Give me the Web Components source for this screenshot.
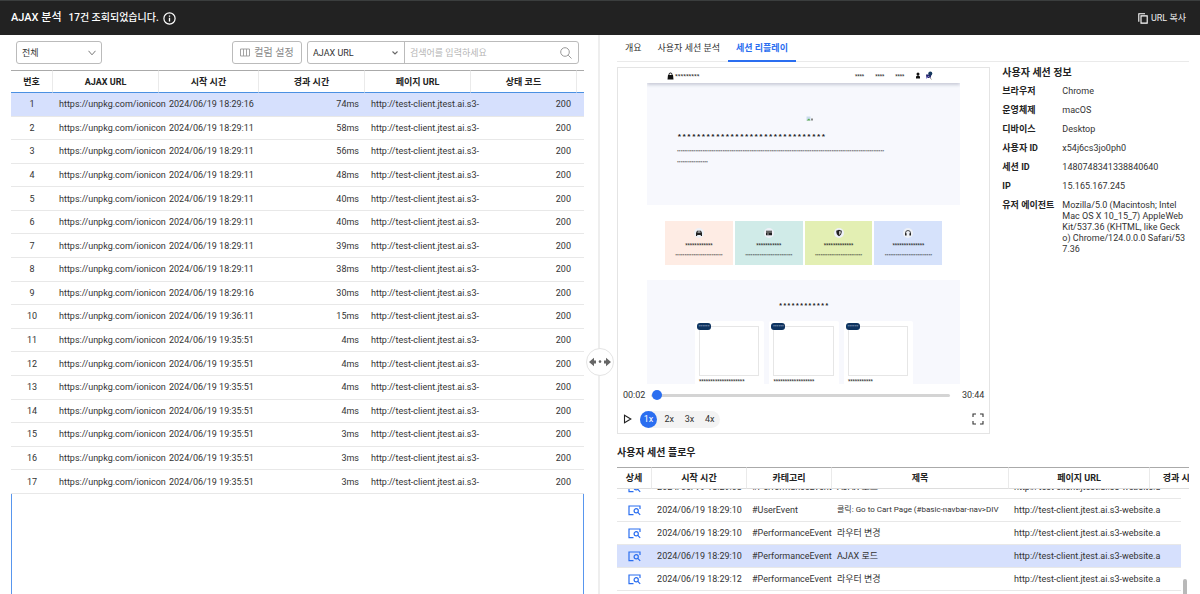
<!DOCTYPE html>
<html lang="ko">
<head>
<meta charset="utf-8">
<meta name="viewport" content="width=device-width, initial-scale=1">
<title>AJAX 분석</title>
<style>
  html, body { height: 100%; }
  body { margin: 0; display: flex; flex-direction: column; overflow: hidden; background: #fff; color: #333;
    font: 9px/12px Roboto, "Noto Sans CJK KR", sans-serif; }
</style>
</head>
<body>
<app-header heading="AJAX 분석" summary="17건 조회되었습니다."></app-header>
<split-view>
  <list-toolbar slot="left"></list-toolbar>
  <ajax-table slot="left"></ajax-table>
  <tab-bar slot="right"></tab-bar>
  <session-detail slot="right">
    <replay-player></replay-player>
    <session-info slot="info"></session-info>
  </session-detail>
  <session-flow slot="right"></session-flow>
</split-view>

<script>
const BASE = `*, *::before, *::after { box-sizing: border-box; }
  button, input, select { font: inherit; color: inherit; margin: 0; padding: 0; border: 0; background: none; }
  h1, h2, p, dl, dd { margin: 0; } svg { display: block; flex: none; }`;

function define(name, markup, setup) {
  customElements.define(name, class extends HTMLElement {
    connectedCallback() {
      if (this.shadowRoot) return;
      const root = this.attachShadow({ mode: 'open' });
      const template = document.createElement('template');
      template.innerHTML = `<style>${BASE}</style>` + markup;
      root.append(template.content.cloneNode(true));
      if (setup) setup.call(this, root);
    }
  });
}

define('app-header', `
<style>
  :host { display: block; flex: none; }
  header { display: flex; align-items: center; height: 35px; padding: 0 14px 0 11px; color: #fff; background: #222; border-top: 1px solid #3b3e3e; }
  h1 { font-size: 11px; font-weight: 500; margin-right: 7px; }
  p { font-size: 10px; font-weight: 500; margin-right: 4px; }
  button { display: flex; align-items: center; gap: 3px; margin-left: auto; color: #eee; }
</style>
<header>
  <h1></h1><p></p>
  <svg width="13" height="13" viewBox="0 0 13 13" fill="none" stroke="#fff"><circle cx="6.5" cy="6.5" r="5.6" stroke-width="1.2"/><path d="M6.5 5.8v3.8M6.5 3.4v1.4" stroke-width="1.3"/></svg>
  <button type="button"><svg width="10" height="11" viewBox="0 0 10 11" fill="none" stroke="#fff"><path d="M7 .7H.8v8M3 2.9h6.2v7.2H3z" stroke-width="1.1"/></svg>URL 복사</button>
</header>`, function (root) {
  root.querySelector('h1').textContent = this.getAttribute('heading');
  root.querySelector('p').textContent = this.getAttribute('summary');
});

define('split-view', `
<style>
  :host { display: grid; grid-template-columns: 1fr 1fr; flex: 1; min-height: 0; position: relative; }
  section { display: flex; flex-direction: column; min-width: 0; min-height: 0; overflow: hidden; }
  .left { padding: 6px 14px 0 11px; border-right: 2px solid #eee; }
  .right { padding: 0 11px 0 17px; }
  .grip { position: absolute; top: 327px; left: 50%; translate: -50% -50%; width: 28px; height: 28px; border-radius: 50%; border: 1px solid #e4e4e4; background: #fff; display: grid; place-items: center; }
</style>
<section class="left"><slot name="left"></slot></section>
<section class="right"><slot name="right"></slot></section>
<button class="grip" type="button" aria-label="크기 조절"><svg width="22" height="10" viewBox="0 0 22 10" fill="#666"><path d="M0 5 5 .8v2.700h2v3H5v2.700zM22 5 17 .8v2.700h-2v3h2v2.700z"/><circle cx="11" cy="4.600" r="1.300"/></svg></button>`);

define('list-toolbar', `
<style>
  :host { display: block; flex: none; }
  form { display: flex; align-items: stretch; height: 23px; margin: 0 5px; }
  .pick { display: grid; align-items: center; border: 1px solid #bbb; border-radius: 3px; }
  .pick select, .pick svg { grid-area: 1 / 1; }
  .pick select { appearance: none; width: 100%; height: 100%; padding: 0 5px; outline: 0; }
  .pick svg { justify-self: end; margin-right: 5px; pointer-events: none; }
  .scope { width: 86px; margin-right: auto; }
  .columns { display: flex; align-items: center; justify-content: center; gap: 4px; width: 70px; margin-right: 5px; font-size: 10px; color: #888; border: 1px solid #bbb; border-radius: 3px; }
  .search { display: flex; width: 272px; border: 1px solid #bbb; border-radius: 3px; }
  .search .pick { width: 97px; border-width: 0 1px 0 0; border-radius: 0; }
  input { flex: 1; min-width: 0; padding: 0 5px; outline: 0; }
  input::placeholder { color: #b5b5b5; }
  .go { padding-right: 6px; }
</style>
<form onsubmit="return false">
  <div class="pick scope"><select aria-label="범위"><option>전체</option></select>
    <svg width="8" height="6" viewBox="0 0 8 6" fill="none" stroke="#777"><path d="M.5.8 4 4.8 7.5.8"/></svg></div>
  <button class="columns" type="button"><svg width="10" height="9" viewBox="0 0 10 9" fill="none" stroke="#999" stroke-width=".9"><path d="M.5 1h9v7h-9zM3.5 1v7M6.5 1v7"/></svg>컬럼 설정</button>
  <div class="search">
    <div class="pick"><select aria-label="검색 항목"><option>AJAX URL</option></select>
      <svg width="8" height="6" viewBox="0 0 8 6" fill="none" stroke="#666" stroke-width="1.1"><path d="M1.5 1.5 4 4l2.500-2.500"/></svg></div>
    <input type="text" aria-label="검색어" placeholder="검색어를 입력하세요">
    <button class="go" type="submit" aria-label="검색"><svg width="12" height="12" viewBox="0 0 12 12" fill="none" stroke="#999"><circle cx="5" cy="5" r="4.300"/><path d="m8.200 8.200 3.300 3.300"/></svg></button>
  </div>
</form>`);

const TABLE = `
  table { border-collapse: separate; border-spacing: 0; table-layout: fixed; width: 100%; }
  th, td { padding: 0 6px; white-space: nowrap; text-align: left; vertical-align: middle; }
  th { height: 22px; padding: 0; text-align: center; font-weight: 700; color: #222; background: #fff; border-top: 1px solid #aaa; border-right: 1px solid #eaeaea; }
  th:last-child { border-right: 0; }
  td { border-bottom: 1px solid #e8e8e8; }
  td.mid { text-align: center; padding: 0; }
  td.num { text-align: right; }
  .picked { background: #d6e0fd; }`;

const DAY = '2024/06/19 ';
const REQUESTS = [['18:29:16', 74], ['18:29:11', 58], ['18:29:11', 56], ['18:29:11', 48], ['18:29:11', 40], ['18:29:11', 40],
  ['18:29:11', 39], ['18:29:11', 38], ['18:29:16', 30], ['19:36:11', 15], ['19:35:51', 4], ['19:35:51', 4], ['19:35:51', 4],
  ['19:35:51', 4], ['19:35:51', 3], ['19:35:51', 3], ['19:35:51', 3]];

define('ajax-table', `
<style>${TABLE}
  :host { display: flex; flex-direction: column; flex: 1; min-height: 0; margin-top: 6px; }
  table { height: 424px; flex: none; }
  th { border-bottom: 1px solid #4a90e2; height: 23px; }
  td.when { padding: 0 0 0 10px; }
  .rest { flex: 1; border: solid #5896ee; border-width: 0 1px; }
</style>
<table>
  <colgroup><col style="width:42px"><col style="width:106px"><col style="width:100px"><col style="width:106px"><col style="width:106px"><col style="width:106px"><col style="width:7px"></colgroup>
  <thead><tr><th>번호</th><th>AJAX URL</th><th>시작 시간</th><th>경과 시간</th><th>페이지 URL</th><th>상태 코드</th><th></th></tr></thead>
  <tbody></tbody>
</table>
<div class="rest"></div>`, function (root) {
  root.querySelector('tbody').innerHTML = REQUESTS.map(([time, ms], i) => `
    <tr class="${i ? '' : 'picked'}"><td class="mid">${i + 1}</td><td>https://unpkg.com/ionicon</td><td class="when">${DAY}${time}</td>
    <td class="num">${ms}ms</td><td>http://test-client.jtest.ai.s3-</td><td class="num">200</td><td></td></tr>`).join('');
});

define('tab-bar', `
<style>
  :host { display: block; flex: none; }
  nav { display: flex; height: 27px; border-bottom: 1px solid #eaeaea; }
  a { display: flex; align-items: center; padding: 0 8px; color: #333; text-decoration: none; border-bottom: 2px solid transparent; margin-bottom: -1px; }
  a[aria-current] { color: #2a6ef0; font-weight: 700; border-color: #2a6ef0; }
</style>
<nav><a href="#overview">개요</a><a href="#analysis">사용자 세션 분석</a><a href="#replay" aria-current="page">세션 리플레이</a></nav>`);

define('session-detail', `
<style>
  :host { display: grid; grid-template-columns: 2fr 1fr; gap: 12px; flex: none; margin-top: 5px; }
</style>
<slot></slot><slot name="info"></slot>`);

const stars = n => '*'.repeat(n);
const FEATURES = [
  ['#feece4', 12, '<path d="M1 4 2 1.800h4L7 4v3H5.800V6H2.200v1H1z"/><path d="M2.300 3.600 2.800 2.600h2.400l.5 1z" fill="#eef1f7"/>'],
  ['#d0ebe8', 11, '<path d="M1 1.800h6v4.400H1z"/><path d="M1 3h6M2 5h2" stroke="#fff" stroke-width=".6"/>'],
  ['#e3efb3', 13, '<path d="M4 .8 6.800 1.800C6.800 4.500 6 6.300 4 7.300 2 6.300 1.200 4.500 1.200 1.800z"/><path d="M4.300 2v4C5.400 5.200 5.700 4 5.700 2.500z" fill="#fff"/>'],
  ['#d6e2fb', 14, '<path d="M1.500 5V4a2.500 2.500 0 0 1 5 0v1" fill="none" stroke="#222" stroke-width=".8"/><path d="M1 4.200h1.600v2.400H1zM5.400 4.200H7v2.400H5.400z"/>']];

define('replay-page', `
<style>
  :host { display: block; height: 316px; overflow: hidden; color: #222; }
  .nav { display: flex; align-items: center; height: 15px; padding: 0 27px 0 20px; box-shadow: 0 2px 3px #c9ccd8; position: relative; font-size: 6px; line-height: 6px; font-weight: 700; }
  .brand { margin: 0 auto 0 1px; }
  .link { font-size: 5px; margin-right: 11px; padding-top: 1px; }
  .link + svg { margin-right: 4px; }
  .hero { height: 122px; padding: 33px 30px 0; background: #f7f8fd; }
  .hero svg { margin: 0 auto 10px; position: relative; left: 6px; }
  .hero h2 { font: 700 8px/10px "Liberation Mono", monospace; margin-bottom: 4px; }
  .tiny { font-size: 4px; line-height: 11px; font-weight: 700; color: #222; white-space: nowrap; }
  .features { display: grid; grid-template-columns: repeat(4, 1fr); gap: 2px; margin: 16px 18px 15px; }
  .feature { height: 44px; padding-top: 7px; text-align: center; }
  .feature svg { margin: 0 auto 3px; background: #eef1f7; border-radius: 50%; }
  .feature b { display: block; font-size: 5px; line-height: 9px; }
  .feature .tiny { line-height: 12px; }
  .shop { height: 120px; padding-top: 22px; background: #f7f8fd; }
  .shop h2 { font: 700 7px/9px "Liberation Mono", monospace; text-align: center; margin-bottom: 10px; }
  .goods { display: grid; grid-template-columns: repeat(3, 1fr); gap: 5px; margin: 0 47px 0 48px; }
  .item { background: #fff; height: 80px; padding: 5px 5px 0 4px; border-radius: 2px; position: relative; font-size: 5px; line-height: 6px; font-weight: 700; }
  .photo { height: 50px; border: 1px solid #e6e6e6; margin-bottom: 2px; }
  .badge { position: absolute; left: 2px; top: 2px; width: 14px; height: 7px; border-radius: 3px; background: #0f3460; color: #a8b8d0; font-size: 4px; line-height: 8px; text-align: center; }
</style>
<div class="nav">
  <svg width="7" height="8" viewBox="0 0 7 8"><path d="M1 3h5l.5 4.500H.5z" fill="#111"/><path d="M2 4V2.500a1.500 1.500 0 0 1 3 0V4" fill="none" stroke="#111"/></svg>
  <span class="brand">${stars(9)}</span>
  <span class="link">${stars(4)}</span><span class="link">${stars(4)}</span><span class="link">${stars(4)}</span>
  <svg width="6" height="7" viewBox="0 0 6 7" fill="#111"><circle cx="3" cy="2" r="1.500"/><path d="M1 6.500V4.500L3 3.200l2 1.300v2z"/></svg>
  <svg width="8" height="10" viewBox="0 0 8 10"><path d="M1 3.500h5.500L5.500 7h-4z" fill="#22226c"/><circle cx="5.300" cy="2.500" r="2" fill="#16395e"/><path d="M1 7.500 4 5" stroke="#8d88df"/><path d="m4 5.500 2.500 3" stroke="#999"/></svg>
</div>
<div class="hero">
  <svg width="8" height="6" viewBox="0 0 8 6"><path d="M.5.5h4v4h-4z" fill="#c8dcec"/><path d="M.5 4.500 3 2.500l1.500 2z" fill="#58a84c"/><path d="M5 2.500h2v2H5z" fill="#888"/></svg>
  <h2>${stars(31)}</h2>
  <p class="tiny">${stars(114)}</p><p class="tiny">${stars(17)}</p>
</div>
<div class="features">${FEATURES.map(([color, n, icon]) => `<div class="feature" style="background:${color}"><svg width="10" height="10" viewBox="-1 -1 10 10" fill="#222">${icon}</svg><b>${stars(n)}</b><p class="tiny">${stars(26)}</p></div>`).join('')}</div>
<div class="shop"><h2>${stars(12)}</h2>
  <div class="goods">${[20, 18, 11].map(n => `<div class="item"><div class="photo"></div>${stars(n)}<span class="badge">${stars(6)}</span></div>`).join('')}</div>
</div>`);

define('replay-player', `
<style>
  :host { display: block; border: 1px solid #e4e4e4; min-width: 0; padding: 0 5px; }
  replay-page { margin: 0 24px; }
  .seek { display: flex; align-items: center; height: 22px; gap: 6px; }
  input { appearance: none; flex: 1; min-width: 0; height: 10px; margin-right: 6px; outline: 0; }
  input::-webkit-slider-runnable-track { height: 3px; border-radius: 2px; background: #d4d4d4; }
  input::-webkit-slider-thumb { appearance: none; width: 10px; height: 10px; margin-top: -4px; border-radius: 50%; background: #2a6ef0; }
  .controls { display: flex; align-items: center; height: 26px; margin-bottom: 1px; }
  .speeds { display: flex; width: 80px; margin: 0 auto 0 8px; background: #f3f3f3; border-radius: 9px; }
  .speeds button { flex: 1 1 0; height: 17px; }
  .speeds [aria-pressed] { flex: 0 0 17px; margin-right: 2px; border-radius: 50%; background: #2a6ef0; color: #fff; }
</style>
<replay-page></replay-page>
<div class="seek"><span>00:02</span><input type="range" min="0" max="1844" value="2" aria-label="재생 위치"><span>30:44</span></div>
<div class="controls">
  <button type="button" aria-label="재생"><svg width="9" height="10" viewBox="0 0 9 10" fill="none" stroke="#222" stroke-width="1.100"><path d="M1.500 1.300 7.800 5 1.500 8.700z"/></svg></button>
  <div class="speeds"><button type="button" aria-pressed="true">1x</button><button type="button">2x</button><button type="button">3x</button><button type="button">4x</button></div>
  <button type="button" aria-label="전체 화면"><svg width="12" height="12" viewBox="0 0 12 12" fill="none" stroke="#333" stroke-width="1.100"><path d="M1 4V1h3M8 1h3v3M11 8v3H8M4 11H1V8"/></svg></button>
</div>`);

define('session-info', `
<style>
  :host { display: block; min-width: 0; }
  h2 { font-size: 10px; line-height: 12px; font-weight: 700; color: #222; margin-bottom: 7px; }
  dl { display: grid; grid-template-columns: 54px 1fr; column-gap: 6px; row-gap: 8px; line-height: 11px; }
  dt { font-weight: 700; color: #222; white-space: nowrap; }
  dd { word-break: break-all; }
</style>
<h2>사용자 세션 정보</h2>
<dl>
  <dt>브라우저</dt><dd>Chrome</dd><dt>운영체제</dt><dd>macOS</dd><dt>디바이스</dt><dd>Desktop</dd>
  <dt>사용자 ID</dt><dd>x54j6cs3jo0ph0</dd><dt>세션 ID</dt><dd>1480748341338840640</dd><dt>IP</dt><dd>15.165.167.245</dd>
  <dt>유저 에이전트</dt><dd>Mozilla/5.0 (Macintosh; Intel<br>Mac OS X 10_15_7) AppleWeb<br>Kit/537.36 (KHTML, like Geck<br>o) Chrome/124.0.0.0 Safari/53<br>7.36</dd>
</dl>`);

const EVENTS = [['18:29:08', '#PerformanceEvent', 'AJAX 로드'], ['18:29:10', '#UserEvent', '클릭: Go to Cart Page (#basic-navbar-nav&gt;DIV', 'user'],
  ['18:29:10', '#PerformanceEvent', '라우터 변경'], ['18:29:10', '#PerformanceEvent', 'AJAX 로드', 'picked'], ['18:29:12', '#PerformanceEvent', '라우터 변경']];

define('session-flow', `
<style>${TABLE}
  :host { display: flex; flex-direction: column; flex: 1; min-height: 0; margin-top: 13px; position: relative; }
  h2 { font-size: 10px; line-height: 12px; font-weight: 700; color: #222; margin-bottom: 8px; }
  .view { flex: 1; min-height: 0; overflow: auto; scrollbar-width: none; padding-bottom: 4px; }
  table { min-width: 594px; }
  th { position: sticky; top: 0; z-index: 1; border-bottom: 1px solid #ddd; }
  td { height: 23px; padding: 0 0 0 5px; }
  .user .title { font-size: 8px; }
  td button { display: block; margin: 0 auto; }
  .bar { position: absolute; top: 43px; right: 0; bottom: 0; width: 8px; background: #fff; display: flex; align-items: end; }
  .bar::after { content: ""; width: 4px; height: 15px; margin-left: 2px; background: #b9b9b9; border-radius: 2px 2px 0 0; }
</style>
<h2>사용자 세션 플로우</h2>
<div class="view"><table>
  <colgroup><col style="width:35px"><col style="width:95px"><col style="width:85px"><col style="width:177px"><col style="width:141px"><col style="width:61px"></colgroup>
  <thead><tr><th>상세</th><th>시작 시간</th><th>카테고리</th><th>제목</th><th>페이지 URL</th><th>경과 시간</th></tr></thead>
  <tbody></tbody>
</table></div>
<div class="bar"></div>`, function (root) {
  root.querySelector('tbody').innerHTML = EVENTS.map(([time, kind, title, state = '']) => `
    <tr class="${state}"><td class="mid"><button type="button" aria-label="상세 보기"><svg width="13" height="11" viewBox="0 0 13 11" fill="none" stroke="#2a6ef0" stroke-width="1.200"><path d="M5.500 9.700H1V1h11v3"/><circle cx="8.200" cy="5.800" r="2.100"/><path d="m9.800 7.400 2.400 2.500"/></svg></button></td>
    <td class="mid">${DAY}${time}</td><td>${kind}</td><td class="title">${title}</td><td>http://test-client.jtest.ai.s3-website.a</td><td></td></tr>`).join('');
  root.querySelector('.view').scrollTop = 13;
});
</script>
</body>
</html>
